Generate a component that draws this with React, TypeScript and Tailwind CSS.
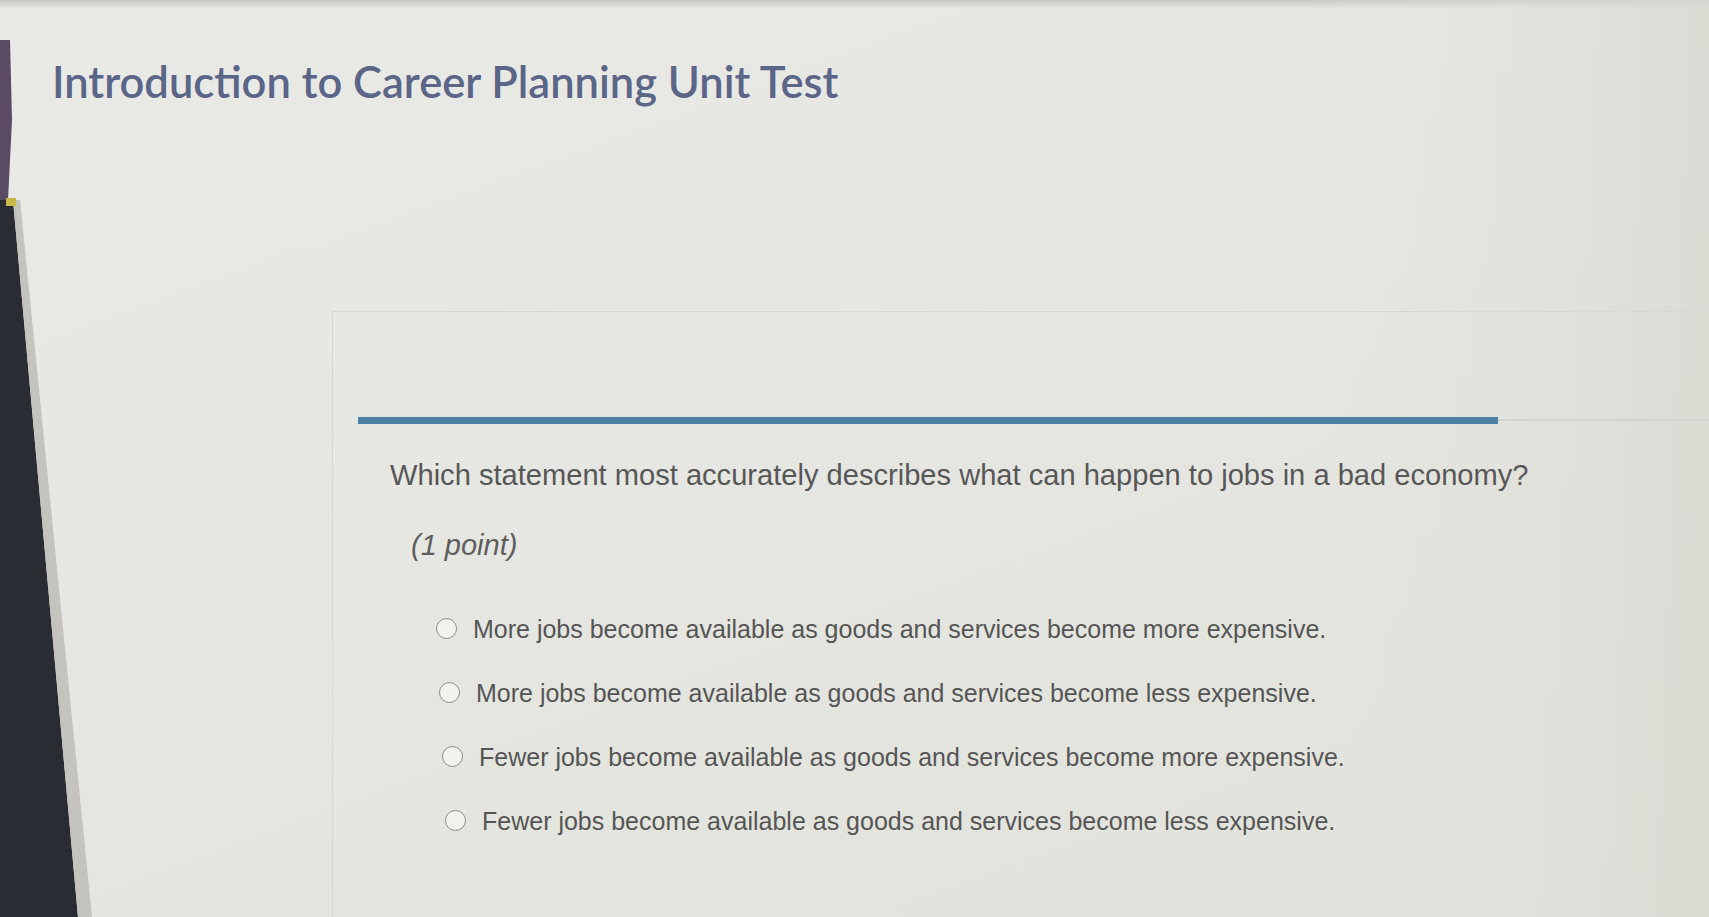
import React from "react";

const options = [
  "More jobs become available as goods and services become more expensive.",
  "More jobs become available as goods and services become less expensive.",
  "Fewer jobs become available as goods and services become more expensive.",
  "Fewer jobs become available as goods and services become less expensive.",
];

export default function App() {
  return (
    <div className="relative w-[1709px] h-[917px] overflow-hidden bg-[linear-gradient(160deg,#e9e9e6_0%,#e6e6e2_45%,#e2e2dc_100%)] font-['Liberation_Sans',Arial,sans-serif]">
      {/* photo bezel / edges drawn as a picture */}
      <svg className="absolute inset-0 pointer-events-none" width="1709" height="917" viewBox="0 0 1709 917">
        <defs>
          <linearGradient id="topband" x1="0" y1="0" x2="0" y2="1">
            <stop offset="0" stopColor="#c9c8c4" />
            <stop offset="1" stopColor="#e4e4e0" />
          </linearGradient>
          <linearGradient id="rightfade" x1="0" y1="0" x2="1" y2="0">
            <stop offset="0" stopColor="#e4e4df" stopOpacity="0" />
            <stop offset="1" stopColor="#d9d9d2" stopOpacity="0.8" />
          </linearGradient>
        </defs>
        <rect x="0" y="0" width="1709" height="8" fill="url(#topband)" />
        <rect x="1300" y="0" width="409" height="917" fill="url(#rightfade)" />
        <polygon points="0,40 10,40 12,120 8,200 0,200" fill="#5a4a63" />
        <polygon points="0,200 13,200 78,917 0,917" fill="#2a2c33" />
        <polygon points="13,200 20,200 92,917 78,917" fill="#c4c3bd" />
        <rect x="6" y="198" width="10" height="8" fill="#c8b84a" />
      </svg>

      <div className="relative pl-[52px] pt-[60px]">
        <h1 className="font-['Lato',sans-serif] font-semibold text-[43.5px] leading-none text-[#5a6588]">
          Introduction to Career Planning Unit Test
        </h1>
      </div>

      <div className="relative ml-[332px] mt-[207px] h-[620px] border-t border-l border-[#d8d8d3]">
        <div className="ml-[25px] mt-[105px] flex items-center">
          <div className="w-[1140px] h-[7px] bg-[#4e80a6]" />
          <div className="flex-1 h-[2px] bg-[#d4d4ce]" />
        </div>
        <p className="ml-[57px] mt-[34px] text-[29.1px] leading-[34px] text-[#575757]">
          Which statement most accurately describes what can happen to jobs in a bad economy?
        </p>
        <p className="ml-[78px] mt-[36px] text-[29px] leading-[34px] italic text-[#5e5e5e]">(1 point)</p>
        <div className="ml-[103px] mt-[52px] flex flex-col gap-[34px]">
          {options.map((o, i) => (
            <label key={i} className="flex items-center gap-[16px] text-[25px] leading-[30px] text-[#555555]" style={{ marginLeft: i * 3 }}>
              <span className="w-[21px] h-[21px] rounded-full border-[1.5px] border-[#8a8a8a] bg-[#f2f2ef] shrink-0" />
              <span>{o}</span>
            </label>
          ))}
        </div>
      </div>
    </div>
  );
}
